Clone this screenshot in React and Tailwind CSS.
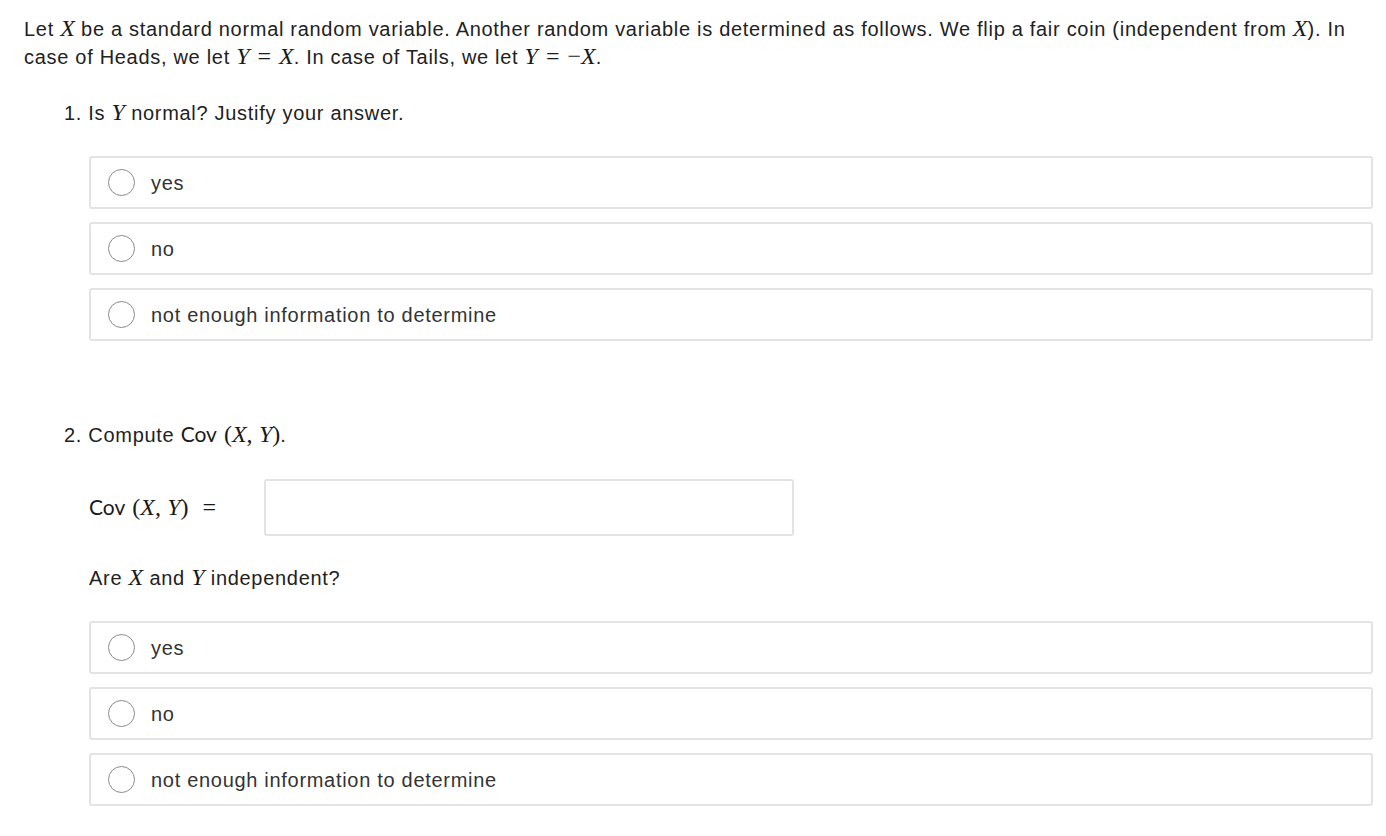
import React from 'react';

const M = ({ children }) => (
  <span className="font-['Liberation_Serif','DejaVu_Serif',serif] italic text-[24px] leading-none tracking-normal text-[#1a1a1a]">{children}</span>
);
const R = ({ children }) => (
  <span className="font-['Liberation_Serif','DejaVu_Serif',serif] text-[24px] leading-none tracking-normal text-[#1a1a1a]">{children}</span>
);
const Eq = () => (
  <span className="mx-[8px] font-['Liberation_Serif','DejaVu_Serif',serif] text-[24px] leading-none tracking-normal text-[#1a1a1a]">=</span>
);
const Cov = () => (
  <span className="mr-[7px] font-['Lato','Open_Sans',sans-serif] text-[21px] leading-none tracking-normal text-[#1a1a1a]">Cov</span>
);

function Option({ label }) {
  return (
    <label className="flex items-center h-[53px] border-2 border-[#e3e3e3] rounded-[3px] bg-white pl-[17px] cursor-pointer">
      <span className="w-[27px] h-[27px] rounded-full border border-[#8a8a8a] bg-white shrink-0"></span>
      <span className="ml-[16px] text-[20px] tracking-[0.7px] text-[#333]">{label}</span>
    </label>
  );
}

function Options() {
  return (
    <div className="ml-[89px] mr-[13px] flex flex-col gap-[13px]">
      <Option label="yes" />
      <Option label="no" />
      <Option label="not enough information to determine" />
    </div>
  );
}

export default function App() {
  return (
    <div className="min-h-screen bg-white font-['Liberation_Sans',Arial,sans-serif] text-[20px] tracking-[0.7px] leading-[28px] text-[#222]">
      <div className="pl-[24px] pr-[20px] pt-[15px]">
        <p>
          Let <M>X</M> be a standard normal random variable. Another random variable is determined as follows. We flip a fair coin (independent from <M>X</M>). In
          case of Heads, we let <M>Y</M><Eq /><M>X</M>. In case of Tails, we let <M>Y</M><Eq /><R>−</R><M>X</M>.
        </p>
      </div>

      <p className="pl-[64px] mt-[28px]">
        1. Is <M>Y</M> normal? Justify your answer.
      </p>

      <div className="mt-[29px]">
        <Options />
      </div>

      <p className="pl-[64px] mt-[80px]">
        2. Compute <Cov /><R>(</R><M>X</M><R>,</R> <M>Y</M><R>)</R>.
      </p>

      <div className="pl-[89px] mt-[30px] flex items-center">
        <span className="whitespace-nowrap">
          <Cov /><R>(</R><M>X</M><R>,</R> <M>Y</M><R>)</R>
          <span className="ml-[14px] font-['Liberation_Serif','DejaVu_Serif',serif] text-[24px] leading-none tracking-normal text-[#1a1a1a]">=</span>
        </span>
        <input
          type="text"
          className="ml-[48px] w-[530px] h-[57px] border-2 border-[#e3e3e3] rounded-[3px] bg-white outline-none"
        />
      </div>

      <p className="pl-[89px] mt-[28px]">
        Are <M>X</M> and <M>Y</M> independent?
      </p>

      <div className="mt-[29px]">
        <Options />
      </div>
    </div>
  );
}
